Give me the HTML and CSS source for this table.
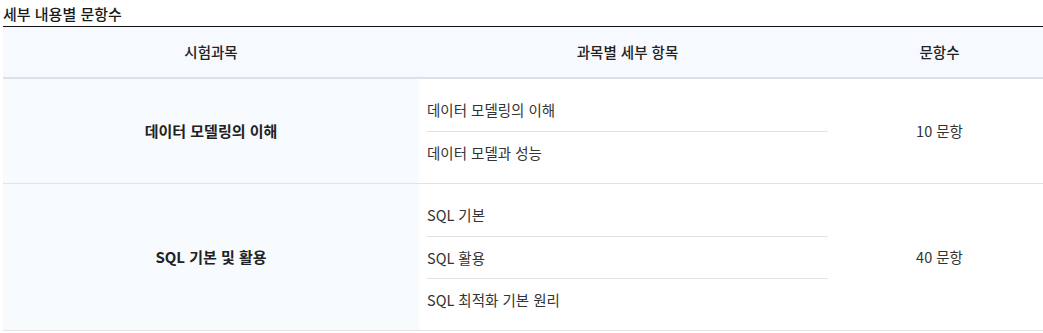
FILE: index.html
```html
<!DOCTYPE html>
<html lang="ko">
<head>
<meta charset="utf-8">
<link rel="stylesheet" href="styles.css">
</head>
<body>
<div class="wrap">
  <h3 class="title">세부 내용별 문항수</h3>
  <table class="tbl">
    <colgroup>
      <col class="c1"><col class="c2"><col class="c3">
    </colgroup>
    <thead>
      <tr><th>시험과목</th><th>과목별 세부 항목</th><th>문항수</th></tr>
    </thead>
    <tbody>
      <tr>
        <td class="subject">데이터 모델링의 이해</td>
        <td class="items">
          <ul class="list">
            <li>데이터 모델링의 이해</li>
            <li>데이터 모델과 성능</li>
          </ul>
        </td>
        <td class="count">10 문항</td>
      </tr>
      <tr>
        <td class="subject">SQL 기본 및 활용</td>
        <td class="items">
          <ul class="list">
            <li>SQL 기본</li>
            <li>SQL 활용</li>
            <li>SQL 최적화 기본 원리</li>
          </ul>
        </td>
        <td class="count">40 문항</td>
      </tr>
    </tbody>
  </table>
</div>
</body>
</html>
```
FILE: styles.css
```css
* { box-sizing: border-box; }
html, body { margin: 0; padding: 0; background: #fff; }
body {
  font-family: "Noto Sans CJK KR", "Noto Sans", sans-serif;
  color: #333;
  font-size: 14px;
}
.wrap { margin-left: 3px; width: 1040px; }
.title {
  margin: 0;
  padding-top: 3px;
  height: 26px;
  line-height: 22px;
  font-size: 15px;
  font-weight: 500;
  color: #1a1a1a;
}
.tbl {
  width: 1040px;
  border-collapse: collapse;
  table-layout: fixed;
  border-top: 1px solid #111;
}
.c1 { width: 416px; }
.c2 { width: 417px; }
.c3 { width: 207px; }
.tbl th {
  height: 51px;
  padding: 0;
  background: #f6f9fd;
  border-bottom: 2px solid #dde0e6;
  font-weight: 500;
  color: #222;
  font-size: 14.5px;
  line-height: 21px;
  text-align: center;
}
.tbl td {
  padding: 10px 8px;
  border-bottom: 1px solid #e1e3e8;
  vertical-align: middle;
  line-height: 21px;
  font-size: 14.5px;
}
.tbl td.subject {
  background: #f8fbfe;
  text-align: center;
  font-weight: 700;
  color: #222;
  font-size: 15px;
}
.tbl td.count { text-align: center; }
.list { list-style: none; margin: 0; padding: 0; }
.list li {
  height: 42px;
  line-height: 42px;
  border-top: 1px solid #e1e3e8;
}
.list li:first-child { border-top: 0; height: 42px; }
```
